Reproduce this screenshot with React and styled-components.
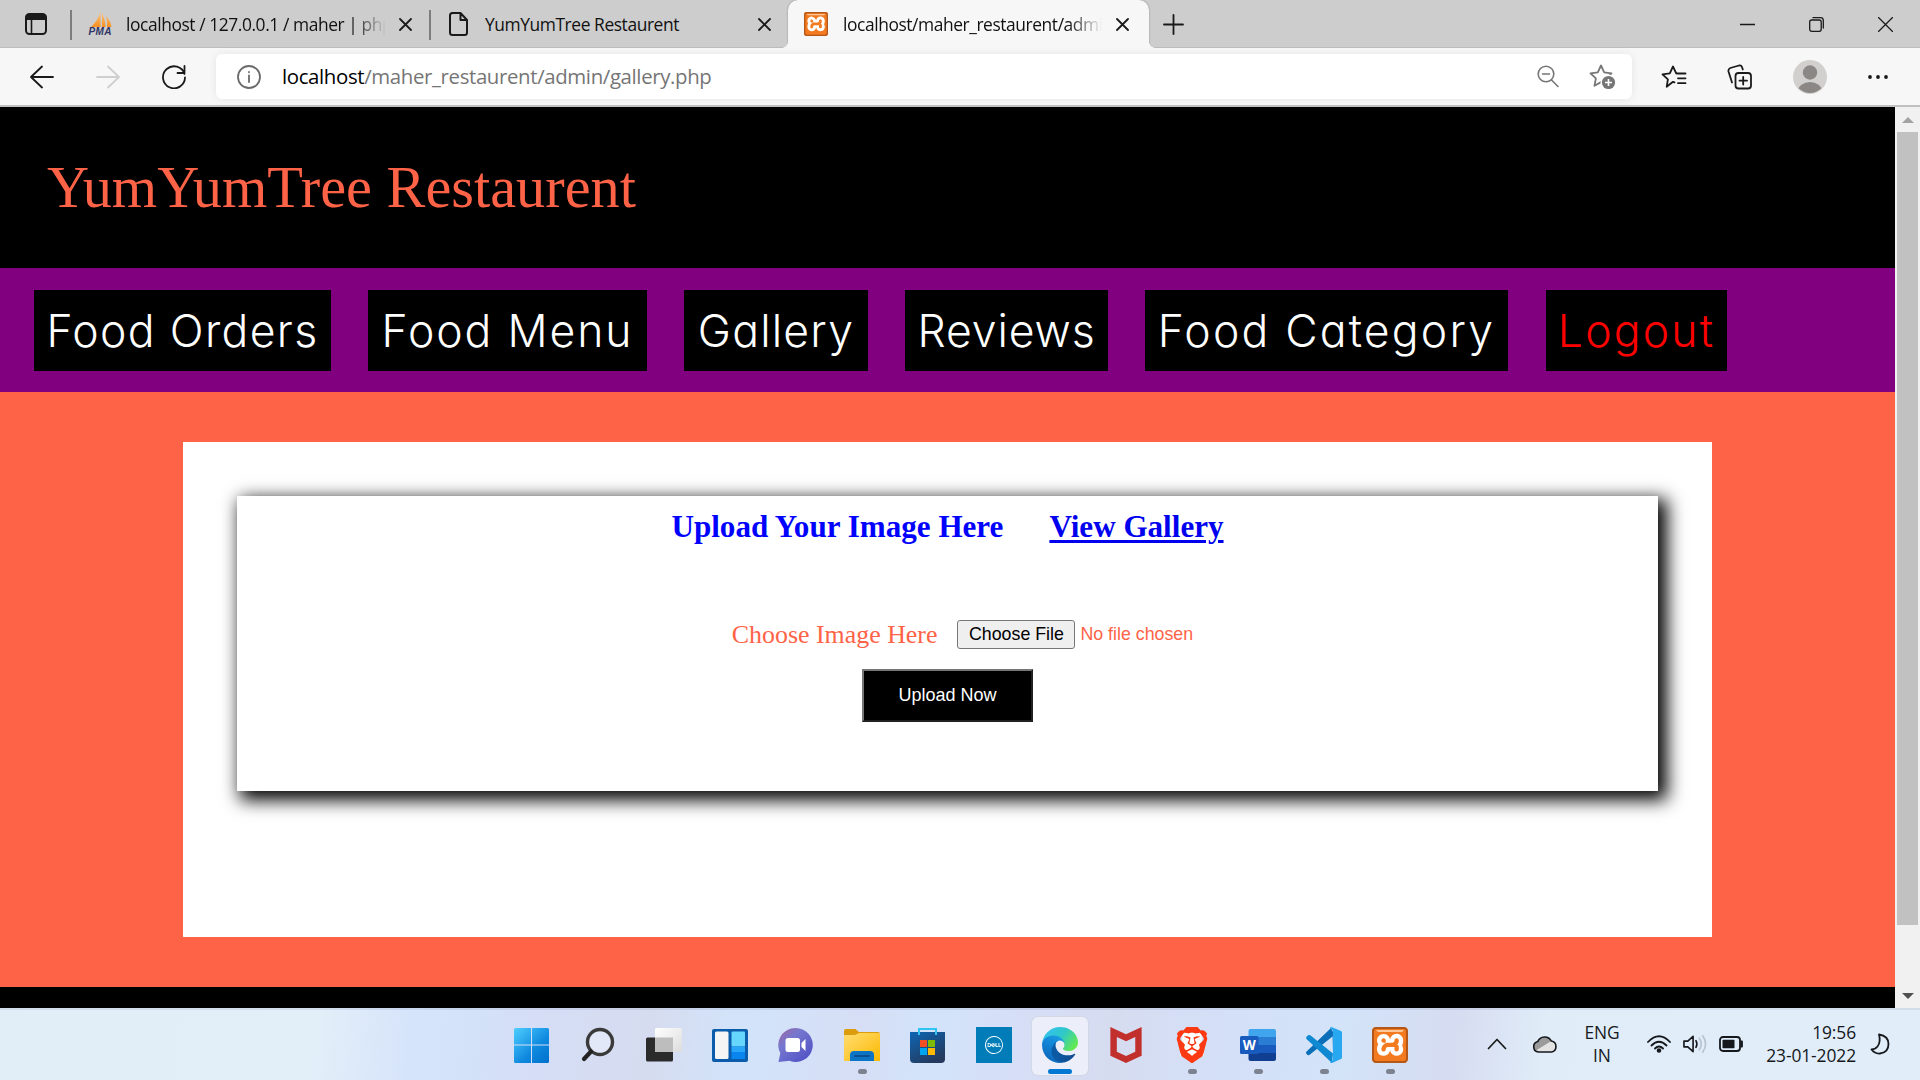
import React from "react";
import styled, { createGlobalStyle, css } from "styled-components";
import { SiXampp, SiBrave, SiMcafee, SiDell } from "react-icons/si";

const ui = `"Open Sans", "Noto Sans", sans-serif`;
const serif = `"Liberation Serif", "Times New Roman", serif`;
const sans = `"Liberation Sans", Arial, sans-serif`;

const GlobalStyle = createGlobalStyle`
  *, *::before, *::after { box-sizing: border-box; }
  body { margin: 0; background: #000; overflow: hidden; }
  svg { display: block; flex: none; }
`;

const Desktop = styled.div`
  width: 1920px;
  height: 1080px;
  display: flex;
  flex-direction: column;
  overflow: hidden;
`;

/* Browser chrome */

const TabStrip = styled.div`
  height: 48px;
  flex: none;
  display: flex;
  align-items: center;
  background: #cdcdcd;
  box-shadow: inset 0 -1px 0 #bdbdbd;
  font-family: ${ui};
`;

const TabActions = styled.div`
  width: 70px;
  padding-left: 25px;
`;

const Divider = styled.div`
  width: 2px;
  height: 30px;
  margin-top: 2px;
  background: #7d7d7d;
`;

const Tab = styled.div`
  width: ${(p) => p.$width}px;
  height: 48px;
  display: flex;
  align-items: center;
  padding: 0 ${(p) => p.$end}px 0 ${(p) => p.$start}px;
  position: relative;
  ${(p) =>
    p.$active &&
    css`
      background: #f7f7f7;
      border-radius: 10px 10px 0 0;
      box-shadow: 0 0 2px rgba(0, 0, 0, 0.35);
      clip-path: inset(0 -8px 0 -8px);
      &::before,
      &::after {
        content: "";
        position: absolute;
        bottom: 0;
        width: 6px;
        height: 6px;
      }
      &::before {
        left: -6px;
        background: radial-gradient(circle at 0 0, transparent 5.5px, #f7f7f7 6px);
      }
      &::after {
        right: -6px;
        background: radial-gradient(circle at 100% 0, transparent 5.5px, #f7f7f7 6px);
      }
    `}
`;

const TabTitle = styled.span`
  flex: 1;
  min-width: 0;
  margin: 0 ${(p) => p.$gap}px 1px ${(p) => p.$lead || 15}px;
  overflow: hidden;
  white-space: nowrap;
  font-size: 17.4px;
  line-height: 24px;
  letter-spacing: -0.42px;
  color: #111;
  ${(p) =>
    p.$fade &&
    css`
      mask-image: linear-gradient(to right, #000 calc(100% - 34px), transparent 100%);
    `}
`;

const NewTab = styled.div`
  margin-left: 14px;
`;

const WindowButtons = styled.div`
  margin-left: auto;
  padding-right: 27px;
  display: flex;
  gap: 54px;
`;

const Toolbar = styled.div`
  height: 59px;
  flex: none;
  display: flex;
  align-items: center;
  background: #f7f7f7;
  border-bottom: 2px solid #c0c0c0;
  padding-left: 30px;
`;

const NavButtons = styled.div`
  width: 186px;
  display: flex;
  gap: 42px;
`;

const AddressBar = styled.div`
  width: 1416px;
  height: 45px;
  display: flex;
  align-items: center;
  padding: 0 16px 0 21px;
  background: #fff;
  border-radius: 6px;
  box-shadow: 0 0 8px rgba(0, 0, 0, 0.08);
`;

const Url = styled.span`
  flex: 1;
  margin: 0 0 2px 21px;
  font-family: ${ui};
  font-size: 20.4px;
  line-height: 30px;
  letter-spacing: -0.36px;
  color: #757575;
  b {
    font-weight: 400;
    color: #000;
  }
`;

const BarIcons = styled.div`
  display: flex;
  gap: 29px;
`;

const ToolbarActions = styled.div`
  display: flex;
  align-items: center;
  margin-left: 29px;
  gap: 40px;
`;

/* Web page */

const Viewport = styled.div`
  height: 901px;
  flex: none;
  display: flex;
`;

const Page = styled.div`
  width: 1895px;
  display: flex;
  flex-direction: column;
  background: #000;
`;

const SiteHeader = styled.header`
  height: 161px;
  padding: 47px 47px 0;
  font-family: ${serif};
  font-size: 58.3px;
  line-height: 67px;
  color: tomato;
  background: #000;
`;

const SiteNav = styled.nav`
  height: 124px;
  display: flex;
  gap: 37px;
  padding: 22px 0 0 34px;
  background: purple;
`;

const NavLink = styled.a`
  width: ${(p) => p.$width}px;
  height: 81px;
  text-align: center;
  white-space: nowrap;
  font-family: Inter, Lato, sans-serif;
  font-feature-settings: "cv11" 1;
  font-weight: 300;
  font-size: 44.5px;
  line-height: 82px;
  letter-spacing: ${(p) => p.$spacing}px;
  background: #000;
  color: ${(p) => (p.$danger ? "red" : "#fff")};
  &:last-child {
    margin-left: 1px;
  }
`;

const Main = styled.main`
  height: 595px;
  padding: 50px 183px 0;
  background: tomato;
`;

const Panel = styled.section`
  height: 495px;
  padding: 54px;
  background: #fff;
`;

const UploadCard = styled.form`
  height: 295px;
  display: flex;
  flex-direction: column;
  align-items: center;
  padding-top: 13px;
  background: #fff;
  box-shadow: 6px 6px 17px 3px #000;
`;

const CardHeading = styled.div`
  display: flex;
  gap: 46px;
  font-family: ${serif};
  font-weight: 700;
  font-size: 31.1px;
  line-height: 36px;
  color: #00f;
`;

const GalleryLink = styled.a`
  text-decoration: underline;
  text-decoration-thickness: 3px;
  text-underline-offset: 3px;
  color: #0000ee;
`;

const FieldRow = styled.div`
  height: 30px;
  display: flex;
  margin-top: 74px;
  padding-left: 30px;
  color: tomato;
`;

const FieldLabel = styled.label`
  font-family: ${serif};
  font-size: 25.9px;
  line-height: 32px;
`;

const FileButton = styled.span`
  width: 118px;
  height: 29px;
  margin: 1px 5px 0 20px;
  text-align: center;
  font-family: ${sans};
  font-size: 17.8px;
  line-height: 27px;
  color: #000;
  background: #efefef;
  border: 1.5px solid #767676;
  border-radius: 3px;
`;

const FileStatus = styled.span`
  font-family: ${sans};
  font-size: 17.8px;
  line-height: 31px;
`;

const SubmitButton = styled.span`
  width: 171px;
  height: 53px;
  margin-top: 20px;
  text-align: center;
  font-family: ${sans};
  font-size: 18px;
  line-height: 49px;
  color: #fff;
  background: #000;
  border: 2px solid;
  border-color: #767676 #212121 #212121 #767676;
`;

const Scrollbar = styled.div`
  width: 25px;
  display: flex;
  flex-direction: column;
  align-items: center;
  background: #f1f1f1;
  padding: 10px 0 9px;
`;

const ScrollArrow = styled.i`
  border: 6px solid transparent;
  ${(p) =>
    p.$down
      ? css`
          margin-top: auto;
          border-top-color: #505050;
          border-bottom: 0;
        `
      : css`
          border-bottom-color: #a3a3a3;
          border-top: 0;
        `}
`;

const ScrollThumb = styled.div`
  width: 21px;
  height: 793px;
  margin-top: 9px;
  background: #c1c1c1;
`;

/* Taskbar */

const Taskbar = styled.footer`
  height: 72px;
  flex: none;
  display: flex;
  align-items: center;
  box-shadow: inset 0 2px 0 rgba(90, 110, 150, 0.12);
  background: linear-gradient(
    96deg,
    #e1edf7 0,
    #e2eef8 320px,
    #d5e3fb 420px,
    #d3e2f9 470px,
    #d5def6 530px,
    #d6dcf0 650px,
    #d2e4fa 740px,
    #d6def5 860px,
    #d2e4fa 930px,
    #d6dff8 1000px,
    #d6dcf0 1110px,
    #d4e0f8 1220px,
    #d3e3f8 1340px,
    #d6dcf1 1450px,
    #e0ecf8 1540px,
    #e1eef9 1920px
  );
`;

const AppList = styled.div`
  display: flex;
  margin-left: 499px;
`;

const AppSlot = styled.div`
  width: 66px;
  height: 72px;
  display: flex;
  justify-content: center;
  padding-top: 9px;
`;

const AppTile = styled.div`
  width: 56px;
  height: 58px;
  display: flex;
  flex-direction: column;
  align-items: center;
  padding-top: 10px;
  border-radius: 6px;
  ${(p) =>
    p.$active &&
    css`
      background: #eceff9;
      box-shadow: 0 0 0 1px #d3d8e6;
    `}
`;

const Indicator = styled.i`
  width: ${(p) => (p.$wide ? 24 : 9)}px;
  height: 5px;
  margin-top: 6px;
  border-radius: 3px;
  background: ${(p) => (p.$wide ? "#0078d4" : "#7c828f")};
`;

const LogoPlate = styled.div`
  width: ${(p) => p.$size}px;
  height: ${(p) => p.$size}px;
  display: flex;
  align-items: center;
  justify-content: center;
  border-radius: ${(p) => p.$radius || 0}px;
  color: ${(p) => p.$color};
  background: ${(p) => p.$plate};
`;

const Tray = styled.div`
  margin-left: 64px;
  display: flex;
  align-items: center;
  flex: 1;
  color: #15181c;
`;

const TrayGroup = styled.div`
  display: flex;
  align-items: center;
  gap: 12px;
  margin: ${(p) => p.$margin};
`;

const TrayText = styled.div`
  width: ${(p) => p.$width}px;
  font-family: ${ui};
  font-size: 17.4px;
  line-height: 23.5px;
  letter-spacing: -0.1px;
  text-align: ${(p) => p.$align};
`;

/* Icons */

const Line = ({ w = 24, h = w, box, sw = 2, color = "#1a1a1a", children }) => (
  <svg width={w} height={h} viewBox={box || `0 0 ${w} ${h}`} fill="none" stroke={color} strokeWidth={sw} strokeLinecap="round" strokeLinejoin="round">
    {children}
  </svg>
);

const CloseIcon = () => (
  <Line w={13} sw={1.8}><path d="M1 1l11 11M12 1L1 12" /></Line>
);

const XamppLogo = ({ size }) => (
  <LogoPlate $size={size} $radius={size / 7} $color="#f47a20" $plate="radial-gradient(#fff 68%, #b85a1c 72%)">
    <svg width={size} height={size} viewBox="0 0 36 36">
      <SiXampp size={36} />
      <rect x="1" y="1" width="34" height="34" rx="3.500" fill="none" stroke="#b4581a" strokeWidth="2" />
      <path d="M4 3h28l-2 2H6z" fill="#fbc79b" />
    </svg>
  </LogoPlate>
);

const PmaLogo = () => (
  <svg width="26" height="26" viewBox="0 0 26 26">
    <defs>
      <linearGradient id="sail" x1="0" y1="0" x2="0" y2="1">
        <stop offset="0" stopColor="#fbc98b" />
        <stop offset="1" stopColor="#f7901e" />
      </linearGradient>
    </defs>
    <path d="M13.500 0v16H4C8 12 12 7 13.500 0zM15 2c2 4 3.500 9 3.500 14H15zM19 5c3 3 5 7 5.500 11H20c.3-4 0-7-1-11z" fill="url(#sail)" />
    <text x="1.500" y="24" fontFamily={sans} fontWeight="700" fontStyle="italic" fontSize="10" textLength="23" fill="#2f3566">PMA</text>
  </svg>
);

const Avatar = () => (
  <svg width="34" height="34" viewBox="0 0 34 34">
    <defs><clipPath id="face"><circle cx="17" cy="17" r="16" /></clipPath></defs>
    <circle cx="17" cy="17" r="17" fill="#d2d0ce" />
    <circle cx="17" cy="12.500" r="7.200" fill="#8a8784" />
    <ellipse cx="17" cy="31" rx="12" ry="9" fill="#8a8784" clipPath="url(#face)" />
  </svg>
);

const WindowsLogo = () => (
  <svg width="36" height="36" viewBox="0 0 36 36">
    <defs>
      <linearGradient id="win" gradientUnits="userSpaceOnUse" x1="0" y1="0" x2="34" y2="36">
        <stop offset="0" stopColor="#4fd0ff" /><stop offset=".6" stopColor="#0f8ae0" /><stop offset="1" stopColor="#0070cc" />
      </linearGradient>
    </defs>
    <path d="M1.500 1h15.500v16.500H0V2.500Q0 1 1.500 1zM18 1h15.500Q35 1 35 2.500v15H18zM0 18.500h17V36H1.500Q0 36 0 34.500zM18 18.500h17v16q0 1.500-1.500 1.500H18z" fill="url(#win)" />
  </svg>
);

const SearchLogo = () => (
  <svg width="36" height="36" viewBox="0 0 36 36" fill="none" stroke="#222" strokeLinecap="round">
    <circle cx="20" cy="15" r="12.500" stroke="#3a3a3a" strokeWidth="3.400" fill="#e2e8f7" />
    <path d="M11 24.500L4 32" strokeWidth="4.200" />
  </svg>
);

const TaskViewLogo = () => (
  <svg width="36" height="36" viewBox="0 0 36 36">
    <defs><linearGradient id="tv" x1="0" y1="0" x2="1" y2="1"><stop offset="0" stopColor="#fff" /><stop offset="1" stopColor="#dcdcdc" /></linearGradient></defs>
    <rect x="0" y="10.500" width="27" height="24" rx="1.500" fill="#2b2b2b" />
    <rect x="9" y="1" width="27" height="24" rx="1.500" fill="url(#tv)" />
    <rect x="9" y="10.500" width="18" height="14.500" fill="#bdbdbd" />
  </svg>
);

const WidgetsLogo = () => (
  <svg width="36" height="36" viewBox="0 0 36 36">
    <rect y="2" width="36" height="33" rx="2" fill="#0b5cab" />
    <rect x="3" y="4.500" width="13.500" height="27.500" rx="1.500" fill="#f5f5f5" />
    <rect x="19.500" y="4.500" width="13.500" height="15" rx="1" fill="#66d6fd" />
    <path d="M19.500 19.500H33V25H19.500z" fill="#2aa6f8" />
    <path d="M19.500 25H33v7H19.500z" fill="#0a84ee" />
  </svg>
);

const ChatLogo = () => (
  <svg width="36" height="36" viewBox="0 0 36 36">
    <defs><linearGradient id="chat" x1="0" y1="0" x2=".9" y2="1"><stop offset="0" stopColor="#a1679f" /><stop offset=".35" stopColor="#7677cf" /><stop offset="1" stopColor="#4e4fc4" /></linearGradient></defs>
    <g transform="translate(-1 0)">
      <path d="M18.500 1a17 17 0 1 1-6 32.800L1.500 35l1.800-9A17 17 0 0 1 18.500 1z" fill="url(#chat)" />
      <rect x="8.500" y="11" width="14.500" height="14" rx="2.500" fill="#fff" />
      <path d="M24.500 16l4-4v12l-4-4z" fill="#fff" />
    </g>
  </svg>
);

const FolderLogo = () => (
  <svg width="36" height="36" viewBox="0 0 36 36">
    <defs><linearGradient id="fold" x1="0" y1="0" x2="1" y2="1"><stop offset="0" stopColor="#ffdc73" /><stop offset="1" stopColor="#fcb900" /></linearGradient></defs>
    <path d="M0 4q0-2 2-2h9.500l3.500 3h19q2 0 2 2v5H0z" fill="#dd9c0b" />
    <path d="M0 8h11l4-2h21v28H0z" fill="url(#fold)" />
    <path d="M6 34V28q0-4 4-4h16q4 0 4 4v6z" fill="#0b74c4" />
    <path d="M11 29h14" stroke="#0a4f8e" strokeWidth="2" strokeLinecap="round" />
  </svg>
);

const StoreLogo = () => (
  <svg width="36" height="36" viewBox="0 0 36 36">
    <defs><linearGradient id="store" x1="0" y1="0" x2=".6" y2="1"><stop offset="0" stopColor="#0d66b4" /><stop offset="1" stopColor="#243a5e" /></linearGradient></defs>
    <path d="M0 5h35v27q0 4-4 4H4q-4 0-4-4z" fill="url(#store)" />
    <path d="M9 8V2h17v6" fill="none" stroke="#31c3f4" strokeWidth="2" />
    <path d="M10 13h7v7h-7z" fill="#f25022" /><path d="M18 13h7v7h-7z" fill="#7fba00" />
    <path d="M10 21h7v7h-7z" fill="#00a4ef" /><path d="M18 21h7v7h-7z" fill="#ffb900" />
  </svg>
);

const EdgeLogo = () => (
  <svg width="36" height="36" viewBox="0 0 256 256">
    <defs>
      <linearGradient id="e1" x1=".25" y1=".5" x2="1" y2=".5"><stop offset="0" stopColor="#0c59a4" /><stop offset="1" stopColor="#114a8b" /></linearGradient>
      <linearGradient id="e2" x1=".6" y1="0" x2=".2" y2="1"><stop offset="0" stopColor="#1b9de2" /><stop offset=".4" stopColor="#1384d6" /><stop offset="1" stopColor="#0a63b8" /></linearGradient>
      <linearGradient id="e3" x1="0" y1=".2" x2="1" y2=".7"><stop offset="0" stopColor="#35c1f1" /><stop offset=".5" stopColor="#2fc7c9" /><stop offset="1" stopColor="#66eb4a" /></linearGradient>
    </defs>
    <g transform="translate(-4.630 -4.920)">
      <path fill="url(#e1)" d="M235.680 195.460a93.730 93.730 0 0 1-10.540 4.710 101.870 101.870 0 0 1-35.900 6.460c-47.320 0-88.540-32.550-88.540-74.320A31.480 31.480 0 0 1 117.130 105c-42.800 1.800-53.800 46.400-53.800 72.530 0 73.880 68.090 81.370 82.760 81.370 7.910 0 19.840-2.300 27-4.560l1.310-.440a128.340 128.340 0 0 0 66.600-52.800 4 4 0 0 0-5.320-5.640z" />
      <path fill="url(#e2)" d="M110.340 246.340A79.200 79.200 0 0 1 87.600 225a80.720 80.720 0 0 1 29.530-120c3.120-1.470 8.450-4.130 15.540-4a32.350 32.350 0 0 1 25.690 13 31.880 31.880 0 0 1 6.360 18.660c0-.210 24.460-79.600-80-79.600-43.900 0-80 41.660-80 78.210a130.150 130.150 0 0 0 12.110 56 128 128 0 0 0 156.380 67.110 75.550 75.550 0 0 1-62.780-8z" />
      <path fill="url(#e3)" d="M156.940 153.780c-.810 1.050-3.300 2.500-3.300 5.660 0 2.610 1.700 5.120 4.720 7.230 14.380 10 41.490 8.680 41.560 8.680a59.560 59.560 0 0 0 30.270-8.350 61.380 61.380 0 0 0 30.430-52.880c.260-22.410-8-37.310-11.340-43.910C228.090 28.760 182.350 4.920 132.610 4.920a128 128 0 0 0-128 126.200c.480-36.540 36.800-66.050 80-66.050 3.500 0 23.460.340 42 10.070 16.340 8.580 24.900 18.940 30.850 29.210 6.180 10.670 7.280 24.150 7.280 29.520s-2.740 13.330-7.800 19.910z" />
    </g>
  </svg>
);

const BraveLogo = () => (
  <svg width="36" height="36" viewBox="0 0 36 36">
    <path d="M9 6h18l3 22-12 6-12-6z" fill="#fff" />
    <g color="#fb3a14"><SiBrave size={36} /></g>
  </svg>
);

const WordLogo = () => (
  <svg width="36" height="36" viewBox="0 0 36 36">
    <path d="M8.500 4q0-2 2-2H34q2 0 2 2v6H8.500z" fill="#41a5ee" />
    <path d="M8.500 10H36v8H8.500z" fill="#2b7cd3" />
    <path d="M8.500 18H36v8H8.500z" fill="#185abd" />
    <path d="M8.500 26H36v6q0 2-2 2H10.500q-2 0-2-2z" fill="#103f91" />
    <rect x="0" y="9" width="18.500" height="18" rx="1.500" fill="#185abd" />
    <text x="9.200" y="22.800" textAnchor="middle" fontFamily={ui} fontWeight="700" fontSize="13.500" fill="#fff">W</text>
  </svg>
);

const CodeLogo = () => (
  <svg width="36" height="36" viewBox="0 0 36 36">
    <path d="M26.500 26.500V9.500L3 28.200Q1.800 28.500.8 27.200L.2 26.500Q-.3 25.200.8 24.200L25 1l2 4z" fill="#0a6fb8" />
    <path d="M.8 12.200Q-.3 11 .5 9.800L2 8.300Q3 7.600 4.300 8.300L27 26.500 26 36z" fill="#0f8ad2" />
    <path d="M26 .3L35 4q1 .5 1 1.500v25q0 1-1 1.500l-9 4q-1.500.3-2-.5l3-3V3.500L24 .8Q25-.3 26 .3z" fill="#27a8f0" />
  </svg>
);

const StarPath = "M12 1.500l3.200 6.900 7.300.9-5.400 5 1.400 7.400L12 18.100l-6.500 3.600 1.400-7.400-5.400-5 7.300-.9z";

const apps = [
  { id: "start", icon: <WindowsLogo /> },
  { id: "search", icon: <SearchLogo /> },
  { id: "taskview", icon: <TaskViewLogo /> },
  { id: "widgets", icon: <WidgetsLogo /> },
  { id: "chat", icon: <ChatLogo /> },
  { id: "files", icon: <FolderLogo />, open: true },
  { id: "store", icon: <StoreLogo /> },
  { id: "dell", icon: <LogoPlate $size={36} $color="#fff" $plate="#007db8"><SiDell size={18} /></LogoPlate> },
  { id: "edge", icon: <EdgeLogo />, open: true, active: true },
  { id: "mcafee", icon: <LogoPlate $size={36} $color="#c1302d" $plate="none"><SiMcafee size={36} /></LogoPlate> },
  { id: "brave", icon: <BraveLogo />, open: true },
  { id: "word", icon: <WordLogo />, open: true },
  { id: "code", icon: <CodeLogo />, open: true },
  { id: "xampp", icon: <XamppLogo size={36} />, open: true },
];

const links = [
  { label: "Food Orders", width: 297, spacing: 1.35 },
  { label: "Food Menu", width: 279, spacing: 1.9 },
  { label: "Gallery", width: 184, spacing: 1.2 },
  { label: "Reviews", width: 203, spacing: 0.9 },
  { label: "Food Category", width: 363, spacing: 2.2 },
  { label: "Logout", width: 181, spacing: 2.2, danger: true },
];

export default function App() {
  return (
    <Desktop>
      <GlobalStyle />
      <TabStrip>
        <TabActions>
          <Line w={22}>
            <rect x="1" y="1" width="20" height="20" rx="3.500" />
            <path d="M2 3.500h18M2 5.500h18" strokeWidth="3" /><path d="M6.500 7v13" strokeWidth="1.600" />
          </Line>
        </TabActions>
        <Divider />
        <Tab $width={357} $start={15} $end={17}>
          <PmaLogo />
          <TabTitle $fade $gap={13} $lead={13}>localhost / 127.0.0.1 / maher | phpMyAdmin</TabTitle>
          <CloseIcon />
        </Tab>
        <Divider />
        <Tab $width={357} $start={18} $end={17}>
          <Line w={19} h={24} box="0 0 19 24"><path d="M3.500 1h8L18 8v12.500q0 2.500-2.500 2.500h-12Q1 23 1 20.500v-17Q1 1 3.500 1zM11.500 1v7H18" /></Line>
          <TabTitle $gap={13} $lead={17}>YumYumTree Restaurent</TabTitle>
          <CloseIcon />
        </Tab>
        <Tab $active $width={361} $start={16} $end={20}>
          <XamppLogo size={24} />
          <TabTitle $fade $gap={14}>localhost/maher_restaurent/admin/gallery.php</TabTitle>
          <CloseIcon />
        </Tab>
        <NewTab><Line w={21} sw={1.8}><path d="M10.500 1v19M1 10.500h19" /></Line></NewTab>
        <WindowButtons>
          <Line w={15} sw={1.3}><path d="M0 7.500h15" /></Line>
          <Line w={15} sw={1.3}><rect x=".7" y="3" width="11.500" height="11.300" rx="2" /><path d="M4 .7h7.500q2.800 0 2.800 2.800V11" /></Line>
          <Line w={15} sw={1.3}><path d="M.5.5l14 14M14.500.5l-14 14" /></Line>
        </WindowButtons>
      </TabStrip>

      <Toolbar>
        <NavButtons>
          <Line sw={1.8}><path d="M23 12H1M12 1.500L1 12l11 10.500" /></Line>
          <Line sw={1.8} color="#cfcfcf"><path d="M1 12h22M12 1.500L23 12 12 22.500" /></Line>
          <Line sw={1.8}><path d="M22.500 9A11 11 0 1 0 23 12.500M22.500 1v7h-7" /></Line>
        </NavButtons>
        <AddressBar>
          <Line color="#6b6b6b" sw={1.8}><circle cx="12" cy="12" r="11" /><path d="M12 10.500v6.500M12 7v.3" /></Line>
          <Url><b>localhost</b>/maher_restaurent/admin/gallery.php</Url>
          <BarIcons>
            <Line color="#767676" sw={1.6}><circle cx="10" cy="10" r="7.800" /><path d="M15.500 16l6.500 6.500M6.500 10h7" /></Line>
            <svg width="27" height="26" viewBox="0 0 27 26" fill="none" stroke="#767676" strokeWidth="1.800" strokeLinejoin="round">
              <path d={StarPath} />
              <circle cx="19.500" cy="18.500" r="8" fill="#fff" stroke="none" />
              <circle cx="19.500" cy="18.500" r="6.600" fill="#767676" stroke="none" />
              <path d="M19.500 15v7M16 18.500h7" stroke="#fff" strokeWidth="1.600" />
            </svg>
          </BarIcons>
        </AddressBar>
        <ToolbarActions>
          <Line w={26} h={24} sw={1.8}><path d="M13.500 17.400L12 16.800l-6.300 5 1.200-7.500-5.400-5 7.300-.9L12 1.500l3.200 6.900M15.800 8.500h8.700M17 13.300h7.500M17 18.200h7.500" /></Line>
          <Line w={26} h={26} sw={1.8}>
            <rect x="8.500" y="9" width="15.500" height="15.500" rx="3" /><path d="M16.200 13v7.500M12.500 16.700H20M5 18.500L1.500 7.500Q1 5 3.300 4L12 1.500q2.200-.5 3 1.500l.8 2.500" />
          </Line>
          <Avatar />
          <svg width="22" height="6" viewBox="0 0 22 6" fill="#1a1a1a"><circle cx="3" cy="3" r="1.900" /><circle cx="11" cy="3" r="1.900" /><circle cx="19" cy="3" r="1.900" /></svg>
        </ToolbarActions>
      </Toolbar>

      <Viewport>
        <Page>
          <SiteHeader>YumYumTree Restaurent</SiteHeader>
          <SiteNav>
            {links.map((l) => (
              <NavLink key={l.label} $width={l.width} $spacing={l.spacing} $danger={l.danger}>{l.label}</NavLink>
            ))}
          </SiteNav>
          <Main>
            <Panel>
              <UploadCard>
                <CardHeading>
                  <span>Upload Your Image Here</span>
                  <GalleryLink>View Gallery</GalleryLink>
                </CardHeading>
                <FieldRow>
                  <FieldLabel>Choose Image Here</FieldLabel>
                  <FileButton>Choose File</FileButton>
                  <FileStatus>No file chosen</FileStatus>
                </FieldRow>
                <SubmitButton>Upload Now</SubmitButton>
              </UploadCard>
            </Panel>
          </Main>
        </Page>
        <Scrollbar>
          <ScrollArrow />
          <ScrollThumb />
          <ScrollArrow $down />
        </Scrollbar>
      </Viewport>

      <Taskbar>
        <AppList>
          {apps.map((a) => (
            <AppSlot key={a.id}>
              <AppTile $active={a.active}>
                {a.icon}
                {a.open && <Indicator $wide={a.active} />}
              </AppTile>
            </AppSlot>
          ))}
        </AppList>
        <Tray>
          <Line w={20} h={12}><path d="M1.500 10.500L10 1.500l8.500 9" strokeWidth="1.700" /></Line>
          <TrayGroup $margin="0 26px 0 25px">
            <svg width="26" height="18" viewBox="0 0 26 18">
              <path d="M6.500 17a5.300 5.300 0 0 1-.8-10.400 7.500 7.500 0 0 1 13.600-.6A5.600 5.600 0 0 1 19.500 17z" fill="#e3e3e3" />
              <path d="M1.500 12a5.300 5.300 0 0 1 4.200-5.400 7.500 7.500 0 0 1 13.600-.6L4 15.500z" fill="#9b9b9b" />
              <path d="M6.500 17a5.300 5.300 0 0 1-.8-10.400 7.500 7.500 0 0 1 13.600-.6A5.600 5.600 0 0 1 19.500 17z" fill="none" stroke="#15181c" strokeWidth="1.600" />
            </svg>
          </TrayGroup>
          <TrayText $width={36} $align="center">ENG<br />IN</TrayText>
          <TrayGroup $margin="0 20px 0 27px">
            <Line w={24} h={18} sw={1.8} color="#15181c">
              <path d="M1 7Q12-4.500 23 7M4.500 10.500q7.500-7.500 15 0M8 13.500q4-4 8 0" /><circle cx="12" cy="15.500" r="1.400" fill="#15181c" />
            </Line>
            <svg width="24" height="20" viewBox="0 0 25 20" fill="none" stroke="#15181c" strokeWidth="1.700" strokeLinecap="round" strokeLinejoin="round">
              <path d="M1 7h4l5.500-5v16L5 13H1zM13.500 6.500q2 3.500 0 7" />
              <path d="M17 4q4 6 0 12M20.500 1.500q6 8.500 0 17" stroke="#b9c3cf" />
            </svg>
            <svg width="24" height="18" viewBox="0 0 24 18" fill="none" stroke="#15181c" strokeWidth="1.800">
              <rect x="1" y="2" width="20" height="14" rx="3" /><rect x="3.500" y="4.700" width="12" height="8.600" rx=".8" fill="#15181c" stroke="none" />
              <path d="M21.500 6.500h1.500v5h-1.500" fill="#15181c" strokeLinejoin="round" />
            </svg>
          </TrayGroup>
          <TrayText $width={93} $align="right">19:56<br />23-01-2022</TrayText>
          <TrayGroup $margin="0 0 0 14px">
            <Line w={20} h={22} sw={1.8} color="#15181c"><path d="M9 1.500Q11 9 7.500 13.500 5 16.500 1.500 16.500 5 21 10 20.500 18.500 19.500 18.500 11 18.500 3 9 1.500z" /></Line>
          </TrayGroup>
        </Tray>
      </Taskbar>
    </Desktop>
  );
}
